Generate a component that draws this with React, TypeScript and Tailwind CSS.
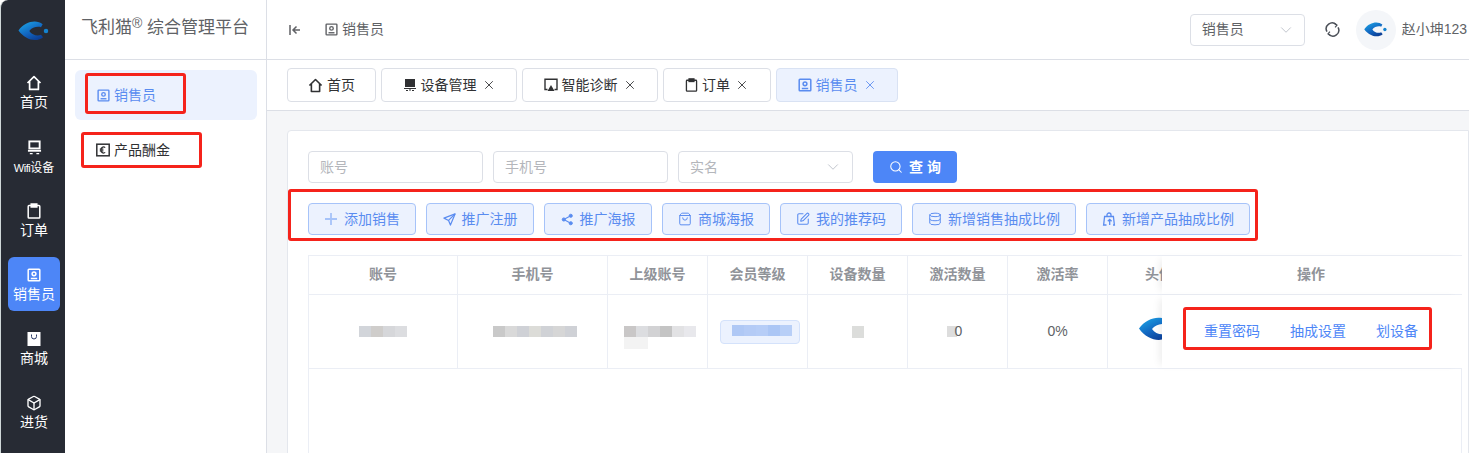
import React from "react";
import { Box, ChevronDown, Database, Search, ShoppingBag, SquarePen, X } from "lucide-react";

type IconProps = { className?: string };

const Contact = ({ className = "" }: IconProps) => (
  <svg viewBox="0 0 14 14" fill="none" stroke="currentColor" strokeWidth="1.5" className={className}>
    <rect x="1.200" y="1.200" width="11.600" height="11.600" rx="0.800" />
    <circle cx="7" cy="5.800" r="1.900" />
    <path d="M3.800 10.500h6.400" />
  </svg>
);

const HomeIcon = ({ className = "" }: IconProps) => (
  <svg viewBox="0 0 16 16" fill="none" stroke="currentColor" strokeWidth="1.700" className={className}>
    <path d="M1.500 8 8 1.600 14.500 8M3.600 6.400v8h8.800v-8" strokeLinejoin="round" />
  </svg>
);

const Device = ({ className = "" }: IconProps) => (
  <svg viewBox="0 0 14 14" fill="currentColor" className={className}>
    <path d="M2 1h10v8H2z" />
    <path d="M1 10h12v1H1zM3 12h2v1H3zM9 12h2v1H9zM6 11.500h2v1H6z" />
  </svg>
);

const DeviceOutline = ({ className = "" }: IconProps) => (
  <svg viewBox="0 0 16 16" fill="none" stroke="currentColor" strokeWidth="2" className={className}>
    <rect x="2.500" y="1.500" width="11" height="7.500" />
    <path d="M1 11.500h14" />
    <path d="M3 14.500h3M10 14.500h3" strokeWidth="1.500" />
  </svg>
);

const Clip = ({ className = "" }: IconProps) => (
  <svg viewBox="0 0 14 16" fill="none" stroke="currentColor" strokeWidth="1.500" className={className}>
    <rect x="1.200" y="2.600" width="11.600" height="12.400" rx="0.800" />
    <rect x="4.200" y="1" width="5.600" height="3" fill="currentColor" />
  </svg>
);

const Diagnose = ({ className = "" }: IconProps) => (
  <svg viewBox="0 0 14 14" fill="none" stroke="currentColor" strokeWidth="1.400" className={className}>
    <path d="M3.500 11.500H1V1.200h12v10.300h-2.500" />
    <path d="M7 7 10.500 13h-7z" fill="currentColor" stroke="none" />
  </svg>
);

const Bag = ({ className = "" }: IconProps) => (
  <svg viewBox="0 0 14 14" className={className}>
    <rect x="0.500" width="13" height="14" fill="#fff" />
    <path d="M4.500 2.500v2a2.500 2.500 0 0 0 5 0v-2" fill="none" stroke="#2a3a66" strokeWidth="1" />
  </svg>
);

const Euro = ({ className = "" }: IconProps) => (
  <svg viewBox="0 0 14 14" fill="none" stroke="currentColor" className={className}>
    <rect x="0.800" y="1.200" width="12.400" height="11.600" strokeWidth="1.500" />
    <path d="M9.200 4.600A2.600 2.600 0 0 0 5 7a2.600 2.600 0 0 0 4.200 2.400M3.800 6.200h3.600M3.800 7.800h3.600" strokeWidth="1.200" />
  </svg>
);

const ShareDots = ({ className = "" }: IconProps) => (
  <svg viewBox="0 0 14 14" fill="currentColor" stroke="currentColor" className={className}>
    <circle cx="10.500" cy="3" r="1.700" />
    <circle cx="3" cy="7" r="1.700" />
    <circle cx="10.500" cy="11" r="1.700" />
    <path d="M10.500 3 3 7l7.500 4" fill="none" strokeWidth="1.200" />
  </svg>
);

const BagUp = ({ className = "" }: IconProps) => (
  <svg viewBox="0 0 14 14" fill="none" stroke="currentColor" strokeWidth="1.300" className={className}>
    <path d="M4.500 13H1.600L2.600 4.500h8.800l1 8.500H11" />
    <path d="M5 4.500V3a2 2 0 0 1 4 0v1.500M7.700 13V7.500M5.800 9.300l1.900-1.900 1.900 1.900" />
  </svg>
);

const Navigate = ({ className = "" }: IconProps) => (
  <svg viewBox="0 0 14 14" fill="none" stroke="currentColor" strokeWidth="1.300" strokeLinejoin="round" className={className}>
    <path d="M13 1 1 5.500l5 2.500 2 5z" />
    <path d="M6 8 13 1" />
  </svg>
);

const Refresh = ({ className = "" }: IconProps) => (
  <svg viewBox="0 0 14 14" fill="none" stroke="currentColor" strokeWidth="1.400" className={className}>
    <path d="M1.800 9A5.500 5.500 0 0 1 10.500 2.500" />
    <path d="M12.200 5A5.500 5.500 0 0 1 3.500 11.500" />
    <path d="M8.700 1.200 11.200 2.900 9.400 5" strokeWidth="1.100" />
    <path d="M5.300 12.800 2.800 11.100 4.600 9" strokeWidth="1.100" />
  </svg>
);

const Collapse = ({ className = "" }: IconProps) => (
  <svg viewBox="0 0 12 12" fill="none" stroke="currentColor" strokeWidth="1.500" className={className}>
    <path d="M1 1v10M11 6H4M7.500 2.500 4 6l3.500 3.500" />
  </svg>
);

const Logo = ({ id, className = "" }: IconProps & { id: string }) => (
  <svg viewBox="0 0 36 24" className={className}>
    <defs>
      <linearGradient id={id} x1="0.100" y1="0.100" x2="0.700" y2="1">
        <stop offset="0" stopColor="#1b9fe2" />
        <stop offset="0.550" stopColor="#1266c0" />
        <stop offset="1" stopColor="#0c3f96" />
      </linearGradient>
    </defs>
    <path
      d="M29 4C22-2 8 0 0 11.500 8 23 22 26 29.500 19.500L27 16.500C23 18.500 16 17 13 12 16 7.500 23 6 27 7.500Z"
      fill={`url(#${id})`}
    />
    <circle cx="33" cy="12" r="2.700" fill="#1583cf" />
  </svg>
);

const RailItem = ({ icon, label, active }: { icon: React.ReactNode; label: React.ReactNode; active?: boolean }) => (
  <div className={`h-[54px] rounded-[6px] flex flex-col items-center pt-[10px] text-white ${active ? "bg-[#4d86f7]" : ""}`}>
    <div className="h-4 flex items-center justify-center">{icon}</div>
    <div className="mt-[1px] leading-5 whitespace-nowrap text-[14px]">{label}</div>
  </div>
);

const Tab = ({ icon, label, width, closable = true, active }: { icon: React.ReactNode; label: string; width: string; closable?: boolean; active?: boolean }) => (
  <div
    className={`${width} h-[34px] rounded-[4px] border flex items-center justify-center text-[14px] ${
      active ? "bg-[#ecf2fe] border-[#d9e2f3] text-[#5a8cf0]" : "bg-white border-[#dcdfe6] text-[#303133]"
    }`}
  >
    {icon}
    <span className="ml-[4px]">{label}</span>
    {closable && <X className="w-[14px] h-[14px] ml-[5px]" strokeWidth={1.500} />}
  </div>
);

const Field = ({ label, select }: { label: string; select?: boolean }) => (
  <div className="w-[175px] h-[32px] rounded-[4px] border border-[#dcdfe6] bg-white flex items-center justify-between pl-[11px] pr-[10px] text-[14px] text-[#b4b6bb]">
    <span>{label}</span>
    {select && <ChevronDown className="w-[18px] h-[18px] text-[#c0c4cc]" strokeWidth={1.300} />}
  </div>
);

const ActionBtn = ({ icon, label, width }: { icon: React.ReactNode; label: string; width: string }) => (
  <div className={`${width} h-[32px] rounded-[4px] border border-[#a6c3f9] bg-[#ecf2fe] text-[#5a8cf0] text-[14px] flex items-center justify-center gap-[6px] whitespace-nowrap`}>
    {icon}
    <span>{label}</span>
  </div>
);

const Th = ({ label, width }: { label: string; width: string }) => (
  <div className={`${width} shrink-0 border-r border-[#ebeef5] flex items-center justify-center pb-[2px] font-bold text-[#909399] text-[14px] whitespace-nowrap overflow-hidden`}>
    {label}
  </div>
);

const Mosaic = ({ colors }: { colors: string[] }) => (
  <div className="flex h-[11px]">
    {colors.map((c, i) => (
      <div key={i} className="w-[12px] h-full" style={{ background: c }} />
    ))}
  </div>
);

const Td = ({ children, width }: { children?: React.ReactNode; width: string }) => (
  <div className={`${width} shrink-0 border-r border-[#ebeef5] flex items-center justify-center text-[14px] text-[#606266] overflow-hidden`}>
    {children}
  </div>
);

const RedBox = ({ className }: { className: string }) => (
  <div className={`absolute border-[3px] border-[#f5231b] rounded-[3px] pointer-events-none ${className}`} />
);

export default function App() {
  return (
    <div className="relative w-[1469px] h-[453px] overflow-hidden flex bg-white font-['Liberation_Sans','Noto_Sans_CJK_SC',sans-serif]">
      <aside className="w-[65px] shrink-0 bg-[#272b34] border-l border-[#cfd8d8] rounded-tl-[8px]">
        <div className="h-[65px] flex items-center justify-center">
          <Logo id="logo-rail" className="w-[31px] h-[20px] -translate-y-[2px]" />
        </div>
        <div className="flex flex-col gap-[10px] pl-[7px] pr-[5px]">
          <RailItem icon={<HomeIcon className="w-4 h-4" />} label="首页" />
          <RailItem
            icon={<DeviceOutline className="w-[15px] h-[15px]" />}
            label={
              <span className="relative top-[1px] text-[12px]">
                <span className="text-[11px] tracking-[-0.500px]">Wifi</span>
                <span>设备</span>
              </span>
            }
          />
          <RailItem icon={<Clip className="w-[14px] h-[16px]" />} label="订单" />
          <RailItem icon={<Contact className="w-[14px] h-[14px]" />} label="销售员" active />
          <RailItem icon={<Bag className="w-[14px] h-[14px]" />} label="商城" />
          <RailItem icon={<Box className="w-[16px] h-[16px]" strokeWidth={2} />} label="进货" />
        </div>
      </aside>

      <nav className="w-[202px] shrink-0 border-r border-[#dcdfe6] bg-white">
        <div className="h-[60px] border-b border-[#dcdfe6] flex items-center pl-[16px] text-[17px] text-[#606266] whitespace-nowrap pb-[4px]">
          飞利猫<sup className="text-[14px] -top-[5px]">®</sup>&nbsp;综合管理平台
        </div>
        <div className="pl-[10px] pr-[9px] pt-[10px] flex flex-col gap-[5px]">
          <div className="h-[50px] rounded-[6px] bg-[#ecf2fe] text-[#5a8cf0] flex items-center pl-[22px] gap-[4px] text-[14px]">
            <Contact className="w-[13px] h-[13px]" />
            销售员
          </div>
          <div className="h-[50px] text-[#303133] flex items-center pl-[21px] gap-[4px] text-[14px]">
            <Euro className="w-[14px] h-[14px]" />
            产品酬金
          </div>
        </div>
      </nav>

      <main className="flex-1 min-w-0 flex flex-col">
        <header className="h-[60px] shrink-0 border-b border-[#dcdfe6] flex items-center pl-[22px] text-[14px] text-[#606266]">
          <Collapse className="w-[12px] h-[12px]" />
          <Contact className="w-[13px] h-[13px] ml-[24px]" />
          <span className="ml-[4px]">销售员</span>
          <div className="ml-auto w-[115px] h-[32px] rounded-[4px] border border-[#dcdfe6] flex items-center justify-between pl-[11px] pr-[9px]">
            <span>销售员</span>
            <ChevronDown className="w-[18px] h-[18px] text-[#c0c4cc]" strokeWidth={1.300} />
          </div>
          <Refresh className="w-[15px] h-[15px] ml-[20px] text-[#4a4f57]" />
          <div className="w-[40px] h-[40px] rounded-full bg-[#f4f6f9] ml-[16px] flex items-center justify-center">
            <Logo id="logo-head" className="w-[23px] h-[15px]" />
          </div>
          <span className="ml-[6px] mr-[2px] whitespace-nowrap">赵小坤123</span>
        </header>

        <div className="h-[51px] shrink-0 border-b border-[#dcdfe6] flex items-start gap-[5px] pt-[8px] pl-[20px]">
          <Tab icon={<HomeIcon className="w-[15px] h-[15px]" />} label="首页" width="w-[89px]" closable={false} />
          <Tab icon={<Device className="w-[14px] h-[14px]" />} label="设备管理" width="w-[136px]" />
          <Tab icon={<Diagnose className="w-[14px] h-[14px]" />} label="智能诊断" width="w-[136px]" />
          <Tab icon={<Clip className="w-[13px] h-[14px]" />} label="订单" width="w-[108px]" />
          <Tab icon={<Contact className="w-[14px] h-[14px]" />} label="销售员" width="w-[122px]" active />
        </div>

        <div className="flex-1 min-h-0 bg-[#f5f6f8] pt-[19px] pl-[20px]">
          <section className="h-[400px] bg-white border border-[#e4e7ed] rounded-tl-[4px] pt-[20px] pl-[20px]">
            <div className="flex items-center gap-[10px]">
              <Field label="账号" />
              <Field label="手机号" />
              <Field label="实名" select />
              <div className="ml-[10px] w-[84px] h-[32px] rounded-[4px] bg-[#4d86f7] text-white text-[14px] font-bold flex items-center justify-center gap-[6px]">
                <Search className="w-[14px] h-[14px]" strokeWidth={1.800} />
                <span>查 询</span>
              </div>
            </div>

            <div className="flex gap-[10px] mt-[20px]">
              <ActionBtn
                icon={
                  <svg viewBox="0 0 14 14" fill="none" stroke="#a6c3f9" strokeWidth="1.800" className="w-[14px] h-[14px]">
                    <path d="M7 1v12M1 7h12" />
                  </svg>
                }
                label="添加销售"
                width="w-[108px]"
              />
              <ActionBtn icon={<Navigate className="w-[13px] h-[13px]" />} label="推广注册" width="w-[108px]" />
              <ActionBtn icon={<ShareDots className="w-[13px] h-[13px]" />} label="推广海报" width="w-[108px]" />
              <ActionBtn icon={<ShoppingBag className="w-[14px] h-[14px]" strokeWidth={1.700} />} label="商城海报" width="w-[108px]" />
              <ActionBtn icon={<SquarePen className="w-[14px] h-[14px]" strokeWidth={1.800} />} label="我的推荐码" width="w-[122px]" />
              <ActionBtn icon={<Database className="w-[14px] h-[14px]" strokeWidth={1.700} />} label="新增销售抽成比例" width="w-[164px]" />
              <ActionBtn icon={<BagUp className="w-[14px] h-[14px]" />} label="新增产品抽成比例" width="w-[164px]" />
            </div>

            <div className="mt-[20px] w-[1154px] h-[198px] border-l border-r border-t border-[#ebeef5]">
              <div className="flex h-[39px] border-b border-[#ebeef5]">
                <Th label="账号" width="w-[149px]" />
                <Th label="手机号" width="w-[150px]" />
                <Th label="上级账号" width="w-[100px]" />
                <Th label="会员等级" width="w-[100px]" />
                <Th label="设备数量" width="w-[100px]" />
                <Th label="激活数量" width="w-[100px]" />
                <Th label="激活率" width="w-[100px]" />
                <div className="w-[54px] shrink-0 overflow-hidden font-bold text-[#909399] text-[14px] leading-[36px] pl-[37px] whitespace-nowrap">头像</div>
                <div className="w-[301px] shrink-0 bg-white shadow-[-6px_0_8px_-4px_rgba(0,0,0,0.08)] flex items-center justify-center pr-[3px] pb-[2px] font-bold text-[#909399] text-[14px]">操作</div>
              </div>
              <div className="flex h-[74px] border-b border-[#ebeef5]">
                <Td width="w-[149px]">
                  <Mosaic colors={["#d2d5da", "#cfcdcb", "#d6d7da", "#dcdde0"]} />
                </Td>
                <Td width="w-[150px]">
                  <div className="pl-[4px]">
                    <Mosaic colors={["#c9c9c9", "#d9d9d9", "#cfd1d6", "#dcdcd8", "#d0d2d6", "#d6d6d6", "#cfd1d6"]} />
                  </div>
                </Td>
                <Td width="w-[100px]">
                  <div className="flex flex-col pt-[11px] pl-[4px]">
                    <Mosaic colors={["#c9c7c7", "#dcdde0", "#d2d2d4", "#c4c4c4", "#e2e2e4", "#e8e8ec"]} />
                    <div className="w-[24px] h-[12px] bg-[#f3f3f3]" />
                  </div>
                </Td>
                <Td width="w-[100px]">
                  <div className="ml-[4px] w-[80px] h-[24px] rounded-[4px] bg-[#ecf2fe] border border-[#d4e2fb] flex items-center justify-center pl-[4px] pb-[2px]">
                    <Mosaic colors={["#afc8f5", "#b4cbf6", "#b6cdf7", "#abc6f5", "#b8cff7"]} />
                  </div>
                </Td>
                <Td width="w-[100px]">
                  <div className="w-[12px] h-[12px] bg-[#dcdddb]" />
                </Td>
                <Td width="w-[100px]">
                  <div className="flex items-center pr-[6px]">
                    <div className="w-[10px] h-[11px] bg-[#dddddd]" />
                    <span className="-ml-[2px]">0</span>
                  </div>
                </Td>
                <Td width="w-[100px]">0%</Td>
                <div className="w-[54px] shrink-0 overflow-hidden flex items-center pl-[31px]">
                  <Logo id="logo-row" className="w-[36px] h-[24px] shrink-0 -translate-y-[3px]" />
                </div>
                <div className="w-[301px] shrink-0 bg-white shadow-[-6px_0_8px_-4px_rgba(0,0,0,0.08)] flex items-center justify-center pr-[3px] gap-[30px] text-[14px] text-[#4d86f7]">
                  <span>重置密码</span>
                  <span>抽成设置</span>
                  <span>划设备</span>
                </div>
              </div>
            </div>
          </section>
        </div>
      </main>

      <RedBox className="left-[85px] top-[73px] w-[101px] h-[41px]" />
      <RedBox className="left-[81px] top-[132px] w-[121px] h-[36px]" />
      <RedBox className="left-[288px] top-[189px] w-[970px] h-[52px]" />
      <RedBox className="left-[1183px] top-[307px] w-[249px] h-[43px]" />
    </div>
  );
}
